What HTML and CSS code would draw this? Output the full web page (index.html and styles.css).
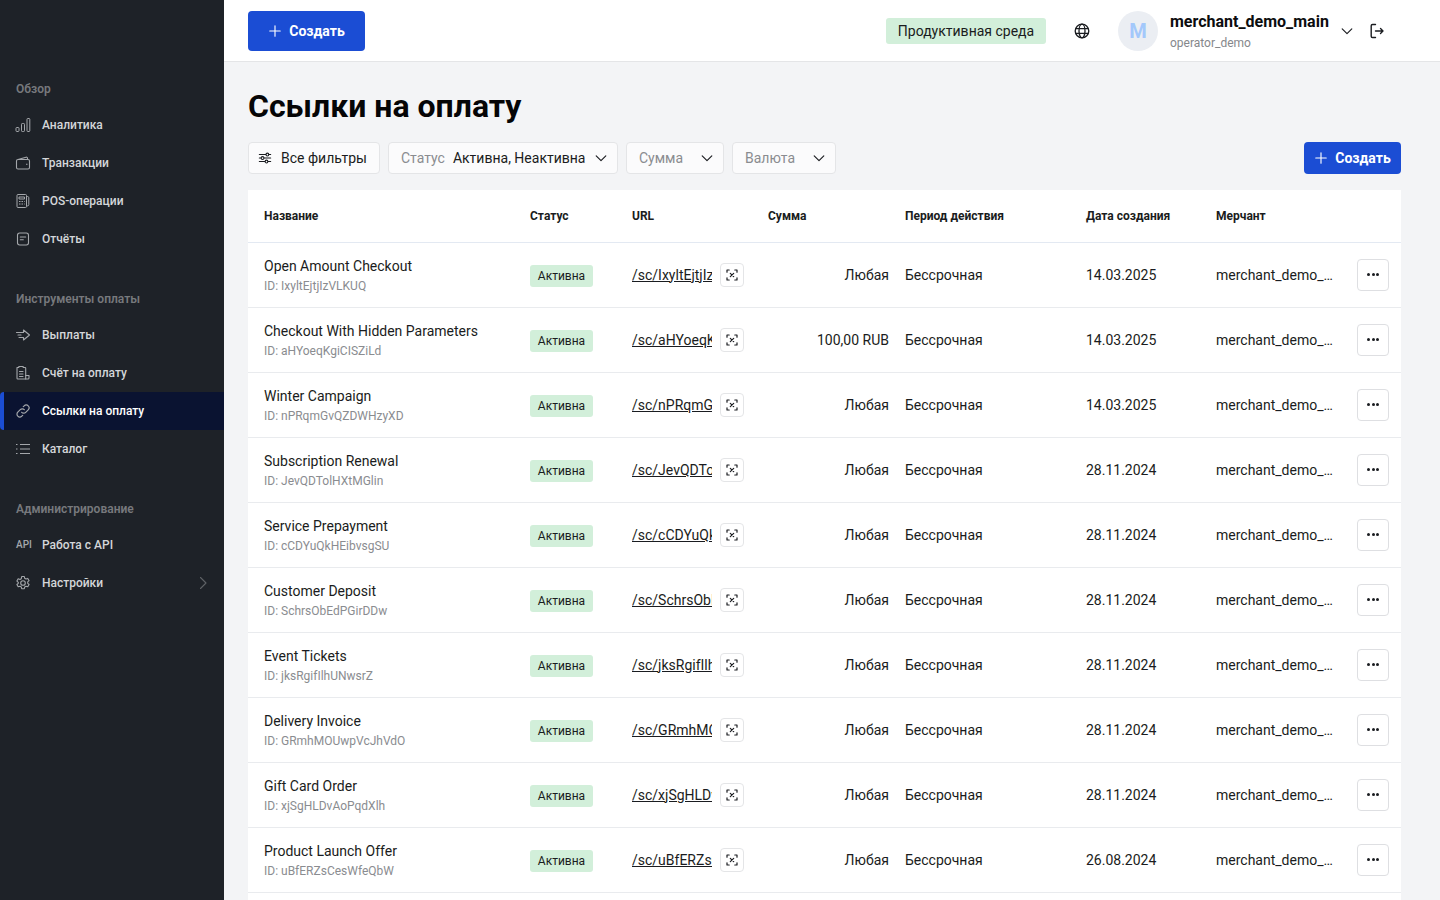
FILE: index.html
```html
<!DOCTYPE html>
<html>
<head>
    <title>Ссылки на оплату</title>
    <link rel="stylesheet" href="styles.css">
</head>
<body>
    <svg class="sprite" width="0" height="0">
        <symbol id="i-plus" viewBox="0 0 16 16"><path d="M8 2v12M2 8h12" fill="none" stroke="currentColor" stroke-width="1.3" stroke-linecap="round"/></symbol>
        <symbol id="i-chevron" viewBox="0 0 16 16"><path d="M2.5 5.5 8 11l5.500-5.500" fill="none" stroke="currentColor" stroke-width="1.3" stroke-linecap="round" stroke-linejoin="round"/></symbol>
        <symbol id="i-qr" viewBox="0 0 12 12"><g fill="none" stroke="currentColor" stroke-width="1.200" stroke-linecap="round" stroke-linejoin="round"><path d="M1 3.200V1h2.200M8.800 1H11v2.200M11 8.800V11H8.800M3.200 11H1V8.800"/><path d="m4.300 4.300 3.400 3.400M7.700 4.300 4.300 7.700"/></g></symbol>
    </svg>

    <div class="layout">
        <aside class="sidebar">
            <div class="nav-title">Обзор</div>
            <a class="nav-item">
                <svg class="nav-icon" viewBox="0 0 16 16"><g fill="none" stroke="currentColor" stroke-width="1"><rect x="1" y="10.500" width="3" height="4" rx=".8"/><rect x="6.500" y="6.500" width="3" height="8" rx=".8"/><rect x="12" y="1.500" width="2.800" height="13" rx=".8"/></g></svg>
                Аналитика
            </a>
            <a class="nav-item">
                <svg class="nav-icon" viewBox="0 0 16 16"><g fill="none" stroke="currentColor" stroke-width="1.100" stroke-linejoin="round"><rect x="1.500" y="4.500" width="13" height="9.500" rx="1.500"/><path d="M3 4.500 11 2.200c.8-.2 1.500.3 1.500 1.100v1.200"/><path d="M11 9.200h1.500"/></g></svg>
                Транзакции
            </a>
            <a class="nav-item">
                <svg class="nav-icon" viewBox="0 0 16 16"><g fill="none" stroke="currentColor" stroke-width="1" stroke-linejoin="round"><rect x="2" y="1.500" width="9.500" height="13" rx="1"/><path d="M4 4h5.500v2H4zM4 8.500h1.500M6.500 8.500H8M9 8.500h.7M4 11h1.500M6.500 11H8M9 11h.7M11.500 3.500h1c.8 0 1.300.5 1.300 1.200v7c0 .7-.5 1.200-1.300 1.200h-1"/></g></svg>
                POS-операции
            </a>
            <a class="nav-item">
                <svg class="nav-icon" viewBox="0 0 16 16"><g fill="none" stroke="currentColor" stroke-width="1.100" stroke-linecap="round"><rect x="2.500" y="2" width="11" height="12" rx="2.200"/><path d="M5.300 6h5.400M5.300 8.800h3"/></g></svg>
                Отчёты
            </a>

            <div class="nav-title nav-title-next">Инструменты оплаты</div>
            <a class="nav-item">
                <svg class="nav-icon" viewBox="0 0 16 16"><g fill="none" stroke="currentColor" stroke-width="1.100" stroke-linejoin="round" stroke-linecap="round"><path d="M1.500 5.500h7V3l6 5-6 5v-2.500H4"/><path d="M3 8h3"/></g></svg>
                Выплаты
            </a>
            <a class="nav-item">
                <svg class="nav-icon" viewBox="0 0 16 16"><g fill="none" stroke="currentColor" stroke-width="1.100" stroke-linecap="round" stroke-linejoin="round"><path d="M2 2.500h1.800V1.500h4.400v1H10c.4 0 .7.300.7.700V14H2.700c-.4 0-.7-.3-.7-.7z"/><path d="M4.500 6.500h3.500M4.500 9h3.500M4.500 11.500h3.500M10.700 10.500h3.300V13c0 .6-.4 1-1 1h-2.300"/></g></svg>
                Счёт на оплату
            </a>
            <a class="nav-item nav-item-active">
                <svg class="nav-icon" viewBox="0 0 16 16"><g fill="none" stroke="currentColor" stroke-width="1.200" stroke-linecap="round"><path d="M6.700 9.300a2.800 2.800 0 0 0 4 0l2.500-2.500a2.800 2.800 0 0 0-4-4L8.300 3.700"/><path d="M9.300 6.700a2.800 2.800 0 0 0-4 0L2.800 9.200a2.800 2.800 0 0 0 4 4l.9-.9"/></g></svg>
                Ссылки на оплату
            </a>
            <a class="nav-item">
                <svg class="nav-icon" viewBox="0 0 16 16"><path d="M5 3.500h10M5 8h10M5 12.500h10M1 3.500h1.500M1 8h1.500M1 12.500h1.500" fill="none" stroke="currentColor" stroke-width="1.100"/></svg>
                Каталог
            </a>

            <div class="nav-title nav-title-next">Администрирование</div>
            <a class="nav-item">
                <span class="nav-api">API</span>
                Работа с API
            </a>
            <a class="nav-item">
                <svg class="nav-icon" viewBox="0 0 16 16"><g fill="none" stroke="currentColor" stroke-width="1.100" stroke-linejoin="round"><circle cx="8" cy="8" r="2.300"/><path d="M6.700 1.500h2.600l.4 1.800 1.300.7 1.800-.6 1.300 2.300-1.400 1.200v1.400l1.400 1.200-1.300 2.300-1.800-.6-1.300.7-.4 1.800H6.700l-.4-1.800-1.300-.7-1.800.6-1.300-2.300 1.400-1.200V7.300L1.900 6.100l1.300-2.300 1.800.6 1.300-.7z"/></g></svg>
                Настройки
                <svg class="nav-arrow" viewBox="0 0 16 16"><path d="m5.500 2.500 5.500 5.500-5.500 5.500" fill="none" stroke="currentColor" stroke-width="1.100" stroke-linecap="round" stroke-linejoin="round"/></svg>
            </a>
        </aside>

        <div class="main">
            <header class="topbar">
                <button class="btn btn-primary btn-large"><svg class="btn-icon"><use href="#i-plus"/></svg>Создать</button>
                <div class="topbar-right">
                    <span class="env-badge">Продуктивная среда</span>
                    <svg class="globe" viewBox="0 0 16 16"><g fill="none" stroke="currentColor" stroke-width="1.300"><circle cx="8" cy="8" r="6.800"/><ellipse cx="8" cy="8" rx="3" ry="6.800"/><path d="M1.600 5.700h12.800M1.600 10.300h12.800"/></g></svg>
                    <div class="avatar">M</div>
                    <div class="user">
                        <div class="user-name">merchant_demo_main</div>
                        <div class="user-login">operator_demo</div>
                    </div>
                    <svg class="user-chevron"><use href="#i-chevron"/></svg>
                    <svg class="logout" viewBox="0 0 16 16"><g fill="none" stroke="currentColor" stroke-width="1.400" stroke-linecap="round" stroke-linejoin="round"><path d="M6.500 1.500H3.500c-.8 0-1.300.5-1.300 1.300v10.400c0 .8.500 1.300 1.300 1.300h3"/><path d="M6.500 8h7.500M11.500 5.500 14 8l-2.500 2.500"/></g></svg>
                </div>
            </header>

            <div class="content">
                <h1>Ссылки на оплату</h1>

                <div class="filters">
                    <button class="filter filter-all">
                        <svg class="filter-icon" viewBox="0 0 16 16"><g fill="none" stroke="currentColor" stroke-width="1.200" stroke-linecap="round"><path d="M1.500 4h7.500M12.500 4h2M1.500 8h2M7 8h7.500M1.500 12h6.500M11.500 12h3"/><circle cx="10.700" cy="4" r="1.600"/><circle cx="5.200" cy="8" r="1.600"/><circle cx="9.700" cy="12" r="1.600"/></g></svg>
                        Все фильтры
                    </button>
                    <button class="filter filter-status"><span class="filter-label">Статус</span>Активна, Неактивна<svg class="filter-chevron"><use href="#i-chevron"/></svg></button>
                    <button class="filter filter-sum"><span class="filter-label">Сумма</span><svg class="filter-chevron"><use href="#i-chevron"/></svg></button>
                    <button class="filter filter-currency"><span class="filter-label">Валюта</span><svg class="filter-chevron"><use href="#i-chevron"/></svg></button>
                    <button class="btn btn-primary btn-small"><svg class="btn-icon"><use href="#i-plus"/></svg>Создать</button>
                </div>

                <table class="links">
                    <colgroup>
                        <col class="col-name"><col class="col-status"><col class="col-url"><col class="col-sum"><col class="col-period"><col class="col-date"><col class="col-merchant"><col class="col-action">
                    </colgroup>
                    <thead>
                        <tr><th>Название</th><th>Статус</th><th>URL</th><th>Сумма</th><th>Период действия</th><th>Дата создания</th><th>Мерчант</th><th></th></tr>
                    </thead>
                    <tbody id="rows"></tbody>
                    <tfoot>
                        <tr><td colspan="8"></td></tr>
                    </tfoot>
                </table>
            </div>
        </div>
    </div>

    <script src="rows.js"></script>
</body>
</html>
```

FILE: styles.css
```css
* {
    box-sizing: border-box;
}

html, body {
    height: 100%;
}

body {
    margin: 0;
    overflow: hidden;
    font-family: Roboto, Inter, sans-serif;
    font-size: 14px;
    color: #1a1c20;
    background-color: #F3F4F6;
}

.sprite {
    position: absolute;
}

.layout {
    display: flex;
    height: 900px;
}

/* sidebar */
.sidebar {
    flex: 0 0 224px;
    padding-top: 72px;
    background-color: #1E2228;
    color: #D4D6D9;
    font-size: 12px;
    font-weight: 500;
}

.nav-title {
    height: 34px;
    padding-left: 16px;
    line-height: 34px;
    color: #77797D;
    font-weight: 600;
}

.nav-title-next {
    margin-top: 24px;
}

.nav-item {
    display: flex;
    align-items: center;
    height: 38px;
    padding-left: 16px;
    padding-right: 16px;
    padding-bottom: 1px;
}

.nav-item-active {
    background-color: #0A1331;
    border-left: 4px solid #1B4DD4;
    border-radius: 4px 0 0 4px;
    padding-left: 12px;
    color: #fff;
}

.nav-icon {
    flex: none;
    width: 16px;
    height: 16px;
    margin-left: -1px;
    margin-right: 11px;
    color: #A4A7AB;
}

.nav-api {
    flex: none;
    width: 15px;
    margin-right: 11px;
    font-size: 10px;
    font-weight: 500;
    color: #A4A7AB;
}

.nav-arrow {
    width: 16px;
    height: 16px;
    margin-left: auto;
    margin-right: -3px;
    color: #5F6266;
}

/* topbar */
.main {
    flex: 1;
    min-width: 0;
}

.topbar {
    display: flex;
    align-items: center;
    justify-content: space-between;
    height: 62px;
    padding-left: 24px;
    padding-right: 55px;
    background-color: #fff;
    border-bottom: 1px solid #E4E5E7;
}

.topbar-right {
    display: flex;
    align-items: center;
}

.btn {
    display: inline-flex;
    align-items: center;
    justify-content: center;
    border: none;
    font-family: inherit;
    font-size: 14px;
    font-weight: 700;
    color: #fff;
}

.btn-primary {
    background-color: #1B4DD4;
    border-radius: 4px;
}

.btn-large {
    width: 117px;
    height: 40px;
}

.btn-small {
    width: 97px;
    height: 32px;
    margin-left: auto;
}

.btn-icon {
    width: 14px;
    height: 14px;
    margin-right: 7px;
}

.env-badge {
    display: block;
    width: 160px;
    height: 26px;
    line-height: 26px;
    text-align: center;
    background-color: #D2EFDA;
    border-radius: 3px;
    color: #1a1c20;
}

.globe {
    width: 16px;
    height: 16px;
    margin-left: 28px;
}

.avatar {
    width: 40px;
    height: 40px;
    margin-left: 28px;
    border-radius: 50%;
    background-color: #EBEEF3;
    color: #A3C8FB;
    font-size: 20px;
    font-weight: 700;
    line-height: 40px;
    text-align: center;
}

.user {
    margin-left: 12px;
    width: 160px;
}

.user-name {
    font-size: 16px;
    font-weight: 700;
    line-height: 22px;
    color: #0C0D0F;
    white-space: nowrap;
}

.user-login {
    margin-top: 2px;
    font-size: 12px;
    line-height: 16px;
    color: #85878B;
}

.user-chevron {
    width: 14px;
    height: 14px;
    margin-left: 10px;
}

.logout {
    width: 16px;
    height: 16px;
    margin-left: 15px;
}

/* content */
.content {
    padding: 0 39px 0 24px;
}

h1 {
    margin: 24px 0 16px;
    font-size: 32px;
    font-weight: 700;
    line-height: 40px;
    color: #050506;
}

.filters {
    display: flex;
    gap: 8px;
    margin-bottom: 16px;
}

.filter {
    display: inline-flex;
    align-items: center;
    height: 32px;
    padding: 0 9px 0 12px;
    background-color: #FBFBFC;
    border: 1px solid #E4E5E7;
    border-radius: 4px;
    font-family: inherit;
    font-size: 14px;
    color: #1a1c20;
    white-space: nowrap;
}

.filter-all {
    width: 132px;
    padding-left: 9px;
}

.filter-status {
    width: 230px;
}

.filter-icon {
    flex: none;
    width: 14px;
    height: 14px;
    margin-right: 9px;
}

.filter-label {
    margin-right: 8px;
    color: #8A8C90;
}

.filter-chevron {
    flex: none;
    width: 14px;
    height: 14px;
    margin-left: auto;
}

.filter-sum {
    width: 98px;
}

.filter-currency {
    width: 104px;
}

/* table */
.links {
    width: 1153px;
    table-layout: fixed;
    border-collapse: collapse;
    background-color: #fff;
}

.col-name { width: 266px; }
.col-status { width: 102px; }
.col-url { width: 136px; }
.col-sum { width: 137px; }
.col-period { width: 181px; }
.col-date { width: 130px; }
.col-merchant { width: 145px; }
.col-action { width: 56px; }

.links th {
    height: 52px;
    padding: 0 16px;
    text-align: left;
    font-size: 12px;
    font-weight: 700;
    color: #1a1c20;
    border-bottom: 1px solid #E3E9F2;
}

.links td {
    height: 65px;
    padding: 0 16px;
    border-bottom: 1px solid #E9EBEE;
    white-space: nowrap;
}

.link-name {
    line-height: 20px;
}

.link-id {
    font-size: 12px;
    line-height: 16px;
    margin-top: 2px;
    color: #8A8C90;
}

.status {
    display: block;
    width: 63px;
    height: 22px;
    margin-top: 2px;
    line-height: 22px;
    text-align: center;
    font-size: 12px;
    background-color: #D2EFDA;
    border-radius: 3px;
}

.links td.url-td {
    padding-right: 8px;
}

.url-cell {
    display: flex;
    align-items: center;
}

.url {
    display: block;
    width: 80px;
    overflow: hidden;
    color: #1a1c20;
    text-decoration: underline;
}

.qr {
    display: flex;
    align-items: center;
    justify-content: center;
    width: 24px;
    height: 24px;
    margin-left: 8px;
    border: 1px solid #E4E5E7;
    border-radius: 4px;
    background-color: #fff;
}

.qr svg {
    width: 12px;
    height: 12px;
}

.links td.sum {
    padding-right: 0;
    text-align: right;
}

.links td.merchant {
    padding-right: 12px;
    overflow: hidden;
    text-overflow: ellipsis;
}

.links td.action {
    padding: 0 12px;
}

.more {
    display: flex;
    align-items: center;
    justify-content: center;
    gap: 1.500px;
    width: 32px;
    height: 32px;
    border: 1px solid #DEDFE2;
    border-radius: 4px;
    background-color: #fff;
}

.more i {
    width: 3px;
    height: 3px;
    border-radius: 50%;
    background-color: #1a1c20;
}
```

FILE: rows.js
```js
const links = [
    ['Open Amount Checkout', 'IxyltEjtjIzVLKUQ', 'Любая', '14.03.2025'],
    ['Checkout With Hidden Parameters', 'aHYoeqKgiCISZiLd', '100,00 RUB', '14.03.2025'],
    ['Winter Campaign', 'nPRqmGvQZDWHzyXD', 'Любая', '14.03.2025'],
    ['Subscription Renewal', 'JevQDTolHXtMGlin', 'Любая', '28.11.2024'],
    ['Service Prepayment', 'cCDYuQkHEibvsgSU', 'Любая', '28.11.2024'],
    ['Customer Deposit', 'SchrsObEdPGirDDw', 'Любая', '28.11.2024'],
    ['Event Tickets', 'jksRgifIlhUNwsrZ', 'Любая', '28.11.2024'],
    ['Delivery Invoice', 'GRmhMOUwpVcJhVdO', 'Любая', '28.11.2024'],
    ['Gift Card Order', 'xjSgHLDvAoPqdXlh', 'Любая', '28.11.2024'],
    ['Product Launch Offer', 'uBfERZsCesWfeQbW', 'Любая', '26.08.2024']
];

const rows = document.getElementById('rows');

links.forEach(([name, id, sum, date]) => {
    const row = document.createElement('tr');
    row.innerHTML = `
        <td><div class="link-name">${name}</div><div class="link-id">ID: ${id}</div></td>
        <td><span class="status">Активна</span></td>
        <td class="url-td"><div class="url-cell"><a class="url">/sc/${id}</a><span class="qr"><svg><use href="#i-qr"/></svg></span></div></td>
        <td class="sum">${sum}</td>
        <td>Бессрочная</td>
        <td>${date}</td>
        <td class="merchant">merchant_demo_main</td>
        <td class="action"><span class="more"><i></i><i></i><i></i></span></td>`;
    rows.appendChild(row);
});
```
